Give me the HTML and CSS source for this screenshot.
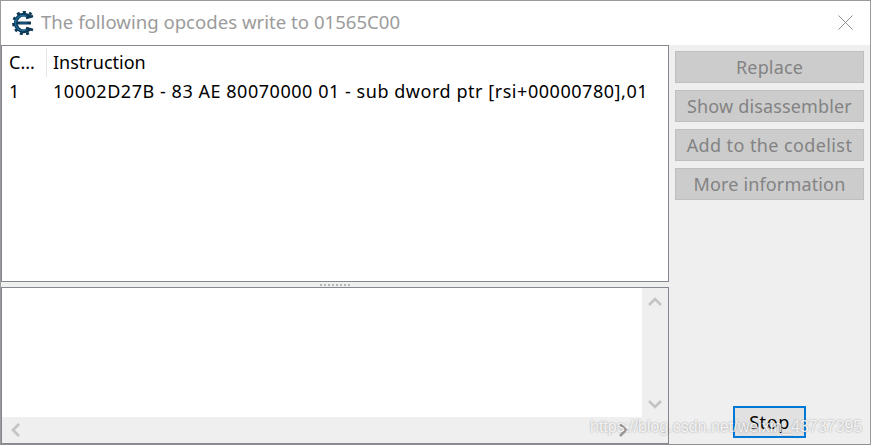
FILE: index.html
```html
<!DOCTYPE html>
<html lang="en">
<head>
<meta charset="utf-8">
<title>Opcodes</title>
<link rel="stylesheet" href="styles.css">
</head>
<body>
<div class="window">
  <header class="titlebar">
    <svg class="logo" viewBox="0 0 24 24" width="24" height="24" aria-hidden="true">
      <path d="M17.500 5.800A8.300 8.300 0 1 0 17.500 18.200" fill="none" stroke="#0c3856" stroke-width="3.800"/>
      <path d="M19.500 3.500A11 11 0 1 0 19.500 20.500" fill="none" stroke="#0c3856" stroke-width="2.800" stroke-dasharray="3 3.200"/>
      <path d="M16.500 7A7.500 7.500 0 1 0 16.500 17" fill="none" stroke="#1c6d9c" stroke-width="1.400"/>
      <path d="M5 12H19" fill="none" stroke="#0c3856" stroke-width="3"/>
      <path d="M8 12H15" fill="none" stroke="#1c6d9c" stroke-width="1"/>
      <path d="M14 7l7-2M14 17l7 2" fill="none" stroke="#0c3856" stroke-width="2.600"/>
    </svg>
    <span class="title">The following opcodes write to 01565C00</span>
    <svg class="close" viewBox="0 0 16 16" width="15" height="15" aria-hidden="true">
      <path d="M.5.5l15 15M15.500.5l-15 15" fill="none" stroke="#8a8a8a" stroke-width="1"/>
    </svg>
  </header>
  <main class="content">
    <section class="left">
      <div class="list">
        <div class="row head">
          <span class="col-count">C...</span>
          <span class="col-ins">Instruction</span>
        </div>
        <div class="row">
          <span class="col-count">1</span>
          <span class="col-ins code">10002D27B - 83 AE 80070000 01 - sub dword ptr [rsi+00000780],01</span>
        </div>
      </div>
      <div class="splitter"><span class="grip"></span></div>
      <div class="memo">
        <div class="memo-main">
          <div class="memo-text"></div>
          <div class="vbar">
            <svg viewBox="0 0 14 10" width="14" height="10" aria-hidden="true"><path d="M1 8l6-6 6 6" fill="none" stroke="#c4c4c4" stroke-width="2.600"/></svg>
            <svg viewBox="0 0 14 10" width="14" height="10" aria-hidden="true"><path d="M1 2l6 6 6-6" fill="none" stroke="#c4c4c4" stroke-width="2.600"/></svg>
          </div>
        </div>
        <div class="hbar">
          <svg viewBox="0 0 10 14" width="10" height="14" aria-hidden="true"><path d="M8 1L2 7l6 6" fill="none" stroke="#c4c4c4" stroke-width="2.600"/></svg>
          <svg viewBox="0 0 10 14" width="10" height="14" aria-hidden="true"><path d="M2 1l6 6-6 6" fill="none" stroke="#9a9a9a" stroke-width="2.600"/></svg>
        </div>
      </div>
    </section>
    <aside class="side">
      <button class="btn" disabled>Replace</button>
      <button class="btn" disabled>Show disassembler</button>
      <button class="btn wide" disabled>Add to the codelist</button>
      <button class="btn" disabled>More information</button>
      <button class="stop">Stop</button>
    </aside>
  </main>
  <div class="watermark">https://blog.csdn.net/weixin_43737395</div>
</div>
</body>
</html>
```

FILE: styles.css
```css
* { box-sizing: border-box; }
html, body { margin: 0; padding: 0; background: #fff; }
body { width: 871px; height: 445px; overflow: hidden; font-family: "Noto Sans", "Open Sans", sans-serif; font-size: 18px; color: #000; }
.window { position: relative; width: 871px; height: 445px; display: flex; flex-direction: column; border: 1px solid #9a9a9a; border-bottom-color: #8f8f8f; background: #efefef; }
.titlebar { height: 44px; flex: none; display: flex; align-items: center; background: #fff; padding: 0 17px 1px 11px; }
.logo { flex: none; margin-right: 5px; }
.title { flex: 1; color: #9b9b9b; font-size: 18.600px; line-height: 24px; margin-bottom: 2px; white-space: nowrap; }
.close { flex: none; }
.content { flex: 1; display: flex; min-height: 0; }
.left { width: 668px; flex: none; display: flex; flex-direction: column; }
.list { height: 237px; flex: none; background: #fff; border: 1px solid #828790; }
.row { height: 29px; display: flex; align-items: center; white-space: nowrap; line-height: 29px; }
.row.head { height: 30px; margin-top: 1px; }
.col-count { width: 44px; padding-left: 7px; flex: none; }
.col-ins { padding-left: 7px; flex: 1; }
.head .col-ins { border-left: 1px solid #e5e5e5; padding-left: 6px; }
.code { letter-spacing: .54px; }
.splitter { height: 5px; flex: none; display: flex; justify-content: center; align-items: center; }
.grip { width: 30px; height: 2px; background: repeating-linear-gradient(90deg, #b5b5b5 0 2px, transparent 2px 4px); }
.memo { flex: 1; min-height: 0; display: flex; flex-direction: column; background: #fff; border: 1px solid #828790; }
.memo-main { flex: 1; min-height: 0; display: flex; }
.memo-text { flex: 1; background: #fff; }
.vbar { width: 26px; flex: none; background: #efefef; display: flex; flex-direction: column; justify-content: space-between; align-items: center; padding: 9px 0 8px; }
.hbar { height: 26px; flex: none; background: #efefef; display: flex; justify-content: space-between; align-items: center; padding: 0 40px 0 9px; }
.side { flex: 1; display: flex; flex-direction: column; gap: 7px; padding: 6px; }
.btn { height: 32px; flex: none; width: 189px; background: #cccccc; border: 1px solid #bfbfbf; color: #838383; font: inherit; font-size: 18px; padding: 0; white-space: nowrap; letter-spacing: .15px; }
.btn.wide { letter-spacing: .4px; }
.stop { height: 32px; width: 73px; flex: none; margin-top: auto; margin-left: 58px; background: #e1e1e1; border: 2px solid #0078d7; color: #000; font: inherit; font-size: 18px; letter-spacing: .6px; padding: 0; }
.watermark { position: absolute; left: 589px; top: 417px; font-family: "Liberation Sans", sans-serif; font-size: 16px; color: rgba(255,255,255,.85); text-shadow: 0 0 2px rgba(90,90,90,.6); white-space: nowrap; pointer-events: none; }
```
